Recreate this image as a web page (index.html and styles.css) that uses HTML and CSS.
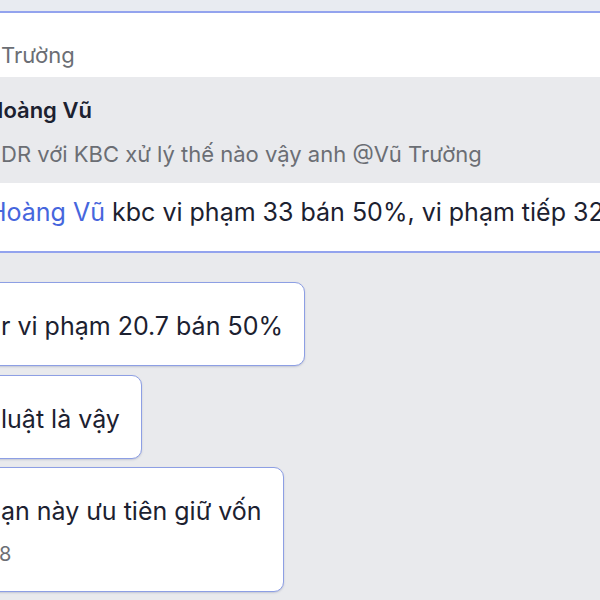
FILE: index.html
```html
<!DOCTYPE html>
<html lang="vi">
<head>
<meta charset="utf-8">
<title>Chat</title>
<link rel="stylesheet" href="styles.css">
</head>
<body>
<div class="page">
  <div class="top-strip"></div>
  <div class="msg">
    <div class="sender">Trường</div>
    <div class="quote">
      <div class="quote-name"><span class="cut-h">Hoàng Vũ</span></div>
      <div class="quote-text">DR với KBC xử lý thế nào vậy anh @Vũ Trường</div>
    </div>
    <div class="msg-text"><span class="mention cut-m">Hoàng Vũ</span> kbc vi phạm 33 bán 50%, vi phạm tiếp 32</div>
  </div>
  <div class="bubbles">
    <div class="bubble"><div class="line">r vi phạm 20.7 bán 50%</div></div>
    <div class="bubble b2"><div class="line">luật là vậy</div></div>
    <div class="bubble b3">
      <div class="line">ạn này ưu tiên giữ vốn</div>
      <div class="time">8</div>
    </div>
  </div>
</div>
</body>
</html>
```
FILE: styles.css
```css
* { box-sizing: border-box; }
html, body {
  margin: 0;
  padding: 0;
}
body {
  background: #e9eaed;
  font-family: Inter, "Noto Sans", sans-serif;
  color: #1c2130;
  width: 600px;
  height: 600px;
  overflow: hidden;
}
.page {
  display: flex;
  flex-direction: column;
}
.top-strip {
  height: 11px;
  background: #e8ebf1;
}
.msg {
  background: #ffffff;
  border-top: 2px solid #93a3ee;
  border-bottom: 2px solid #93a3ee;
  white-space: nowrap;
}
.sender {
  font-size: 22px;
  line-height: 30px;
  color: #6b6e74;
  padding: 27px 0 7px 1px;
}
.quote {
  background: #e9eaed;
  padding: 18px 0 14px 0;
}
.quote-name {
  font-size: 22px;
  line-height: 30px;
  font-weight: 600;
  color: #1c2130;
}
.cut-h {
  display: inline-block;
  margin-left: -13px;
}
.cut-m {
  display: inline-block;
  margin-left: -12px;
}
.quote-text {
  margin-top: 14px;
  font-size: 22px;
  line-height: 30px;
  color: #6b6e74;
  padding-left: 1px;
}
.msg-text {
  font-size: 25px;
  line-height: 32px;
  padding: 13px 0 23px 0;
  color: #1c2130;
}
.mention {
  color: #4666dd;
}
.bubbles {
  display: flex;
  flex-direction: column;
  align-items: flex-start;
  gap: 9px;
  margin-top: 29px;
  margin-left: -22px;
}
.bubble {
  background: #ffffff;
  border: 1.5px solid #8d9fe4;
  border-radius: 10px;
  padding: 26px 21px 22px 22px;
  box-shadow: 0 1px 2px rgba(80, 90, 140, 0.25);
  white-space: nowrap;
}
.b3 {
  margin-top: -1px;
  padding-bottom: 24px;
}
.line {
  font-size: 25px;
  line-height: 34px;
  color: #1c2130;
}
.time {
  margin-top: 13px;
  font-size: 20px;
  line-height: 26px;
  color: #6b6e74;
  margin-left: -2px;
}
```
